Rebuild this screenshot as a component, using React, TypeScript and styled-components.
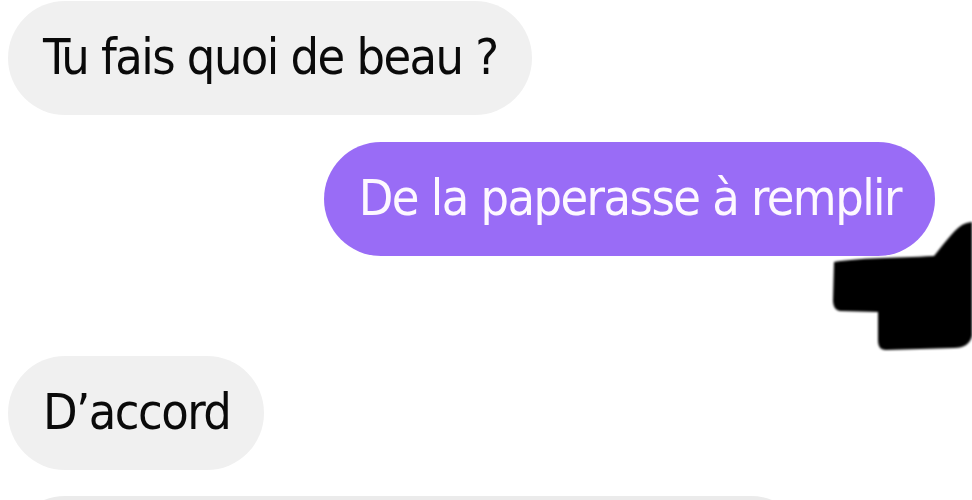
import React from "react";
import styled, { createGlobalStyle } from "styled-components";

const Global = createGlobalStyle`
  html, body { margin: 0; padding: 0; background: #ffffff; overflow: hidden; }
  body { width: 972px; height: 500px; }
`;

const Thread = styled.div`
  position: relative;
  width: 972px;
  height: 500px;
  overflow: hidden;
  box-sizing: border-box;
  padding: 1px 37px 0 8px;
  display: flex;
  flex-direction: column;
  font-family: "DejaVu Sans Condensed", "Liberation Sans", sans-serif;
`;

const Row = styled.div<{ $out?: boolean; $gap: number }>`
  display: flex;
  justify-content: ${(p) => (p.$out ? "flex-end" : "flex-start")};
  margin-top: ${(p) => p.$gap}px;
`;

const Bubble = styled.div<{ $out?: boolean }>`
  height: 114px;
  box-sizing: border-box;
  display: flex;
  align-items: center;
  padding: 0 34px 3px 35px;
  border-radius: 57px;
  background: ${(p) => (p.$out ? "#996cf6" : "#f0f0f0")};
  color: ${(p) => (p.$out ? "#fdf8ff" : "#0a0a0a")};
  font-size: 50px;
  letter-spacing: -1.55px;
  line-height: 1;
  white-space: nowrap;
`;

const Ghost = styled(Bubble)`
  width: 800px;
  background: #ebebeb;
`;

const Scribble = styled.svg`
  position: absolute;
  left: 826px;
  top: 214px;
  width: 146px;
  height: 142px;
  filter: blur(1.2px);
`;

export default function App() {
  return (
    <>
      <Global />
      <Thread>
        <Row $gap={0}>
          <Bubble>Tu fais quoi de beau ?</Bubble>
        </Row>
        <Row $out $gap={27}>
          <Bubble $out>De la paperasse à remplir</Bubble>
        </Row>
        <Row $gap={100}>
          <Bubble>D’accord</Bubble>
        </Row>
        <Row $gap={26}>
          <Ghost />
        </Row>
        <Scribble viewBox="0 0 146 142">
          <path
            d="M8 48 C 30 44, 70 44, 108 42 C 118 30, 126 18, 136 11 C 142 8, 146 8, 146 8 L 146 122 C 144 130, 138 134, 128 134 L 60 136 C 54 136, 52 132, 52 126 L 52 98 L 14 97 C 9 96, 7 92, 7 86 Z"
            fill="#000"
          />
        </Scribble>
      </Thread>
    </>
  );
}
